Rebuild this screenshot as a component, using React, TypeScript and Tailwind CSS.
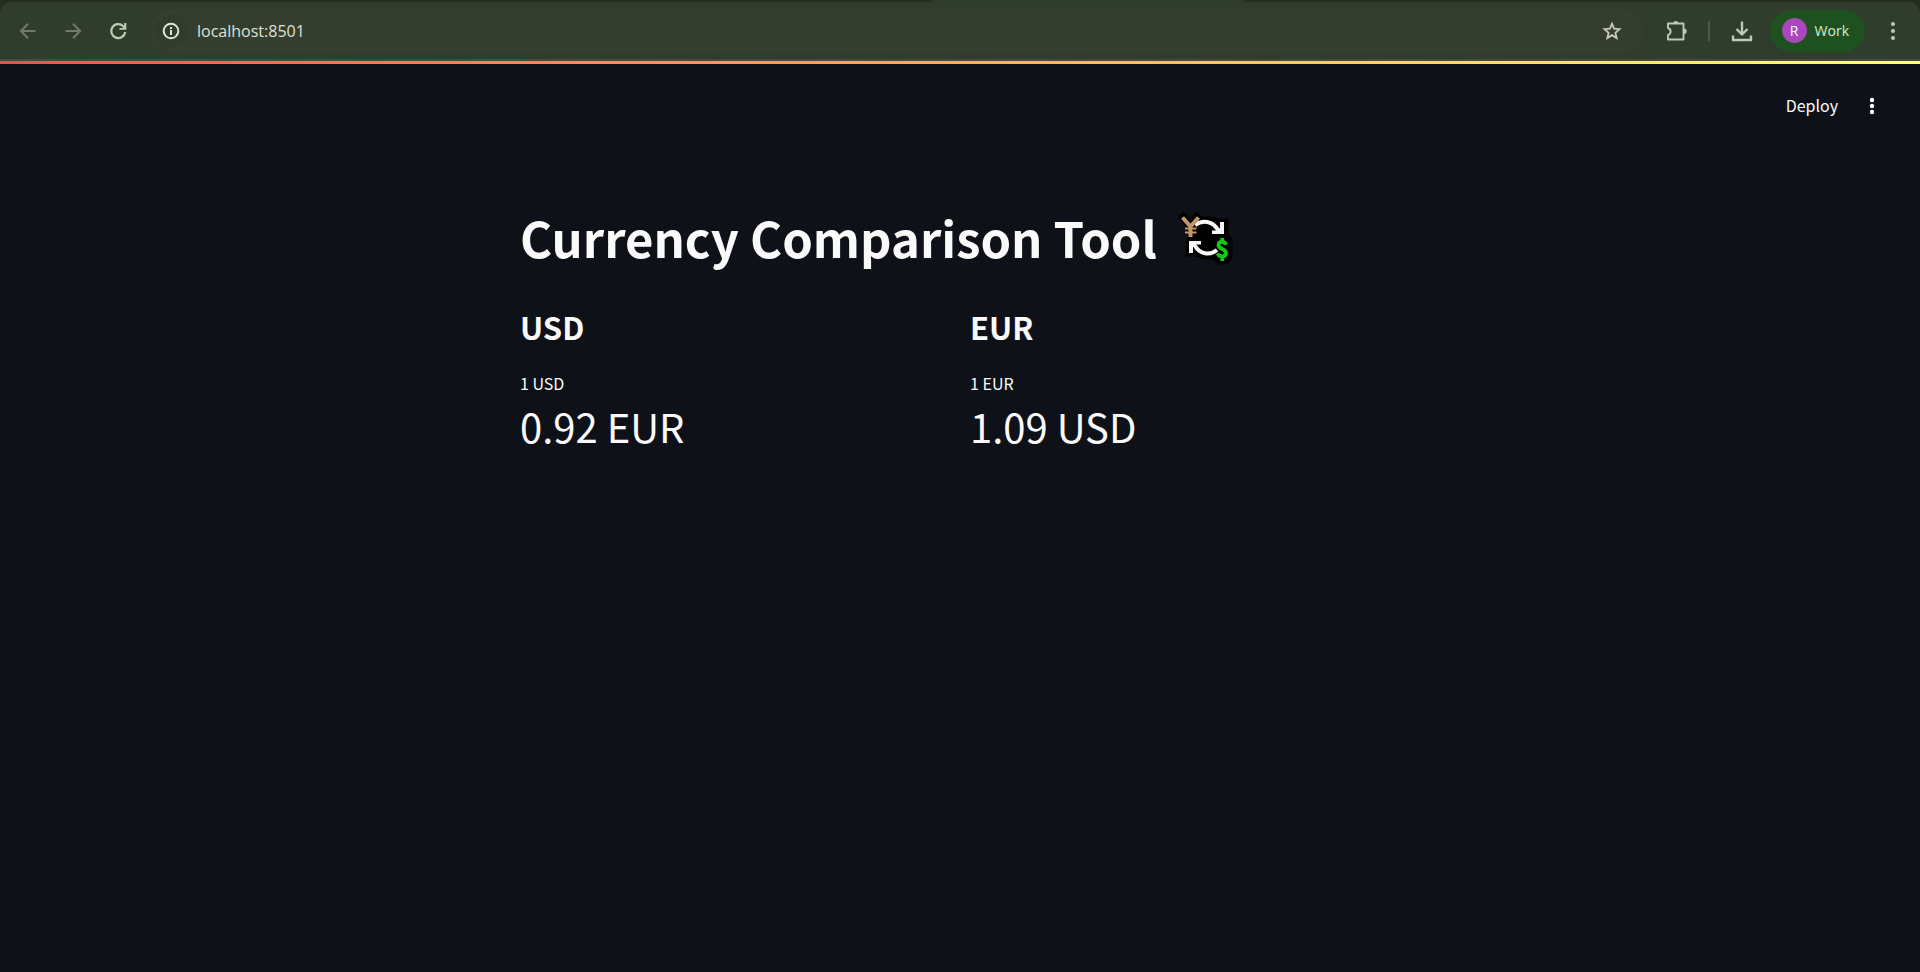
import React from "react";

const iconButton = "flex items-center justify-center";

function BrowserBar() {
  return (
    <header className="bg-[#262c22]">
      <div className="flex justify-center bg-[#262c22] pl-64">
        <div className="h-[2px] w-[312px] bg-[#303c2c]" />
      </div>
      <div className="flex h-[57px] items-center rounded-t-xl bg-[#303c2c] text-[#b9cdb4]">
        <nav aria-label="History" className="flex items-center gap-[21px] pl-4">
          <button aria-label="Back" className={`${iconButton} size-6 text-[#6f7b6b]`}>
            <svg viewBox="0 0 24 24" className="size-6" fill="none" stroke="currentColor" strokeWidth="2">
              <path d="M19.500 12H5M12 4.800L4.900 12L12 19.200" />
            </svg>
          </button>
          <button aria-label="Forward" className={`${iconButton} size-6 text-[#6f7b6b]`}>
            <svg viewBox="0 0 24 24" className="size-6" fill="none" stroke="currentColor" strokeWidth="2">
              <path d="M4.500 12H19M12 4.800L19.100 12L12 19.200" />
            </svg>
          </button>
          <button aria-label="Reload" className={`${iconButton} size-6`}>
            <svg viewBox="0 0 24 24" className="size-6" fill="none" stroke="currentColor" strokeWidth="2.200">
              <path d="M19.200 13A7 7 0 1 1 17.300 7.200L19 9" />
              <path d="M20.300 4V10.800H13.500V9H18.200V4Z" fill="currentColor" stroke="none" />
            </svg>
          </button>
        </nav>
        <div className="ml-5 flex h-[42px] min-w-0 grow items-center rounded-full bg-[#333e2e] pr-5 pl-[5px]">
          <button aria-label="Site information" className={`${iconButton} size-8 rounded-full bg-[#303c2c] text-[#dfe5dc]`}>
            <svg viewBox="0 0 20 20" className="size-5" fill="none" stroke="currentColor" strokeWidth="2">
              <circle cx="10" cy="10" r="7.300" />
              <path d="M10 9V14M10 6V8" />
            </svg>
          </button>
          <input
            aria-label="Address"
            defaultValue="localhost:8501"
            className="ml-[10px] min-w-0 grow bg-transparent font-['Open_Sans',sans-serif] text-base leading-6 text-[#dfe0d8] outline-none"
          />
          <button aria-label="Bookmark this page" className={`${iconButton} size-6 text-[#c9c9c1]`}>
            <svg viewBox="0 0 24 24" className="size-6" fill="none" stroke="currentColor" strokeWidth="1.800">
              <path d="M12 4.700L14.100 9.700L19.500 10.150L15.400 13.700L16.650 19L12 16.150L7.350 19L8.600 13.700L4.500 10.150L9.900 9.700Z" />
            </svg>
          </button>
        </div>
        <div className="flex items-center pr-[15px] pl-5">
          <button aria-label="Extensions" className={`${iconButton} size-6`}>
            <svg viewBox="0 0 24 24" className="size-6" fill="none" stroke="currentColor" strokeWidth="1.900">
              <path d="M4 4.500H19.500V20.500H4V16C7.500 15 7.500 10 4 9Z" strokeLinejoin="round" />
              <path d="M9.200 4.500a2.600 2.600 0 0 1 5.200 0zM20 9.500a2.700 2.700 0 0 1 0 5.400z" fill="currentColor" stroke="none" />
            </svg>
          </button>
          <div className="mx-5 h-5 w-[2px] bg-[#4a5e47]" />
          <button aria-label="Downloads" className={`${iconButton} size-6`}>
            <svg viewBox="0 0 24 24" className="size-6" fill="none" stroke="currentColor" strokeWidth="2.400">
              <path d="M12 2.500V15M6.500 10L12 15.500L17.500 10M3 16.500V21H21V16.500" strokeLinejoin="round" />
            </svg>
          </button>
          <button className="ml-4 flex h-[42px] items-center gap-2 rounded-full bg-[#1e511f] pr-4 pl-3 font-['Open_Sans',sans-serif] text-sm text-[#d5ecd0]">
            <span className="flex size-[25px] items-center justify-center rounded-full bg-[#ab47bc] text-sm text-white">R</span>
            Work
          </button>
          <button aria-label="Browser menu" className={`${iconButton} ml-4 size-6`}>
            <svg viewBox="0 0 24 24" className="size-6" fill="currentColor">
              <circle cx="12" cy="5" r="2" />
              <circle cx="12" cy="12" r="2" />
              <circle cx="12" cy="19" r="2" />
            </svg>
          </button>
        </div>
      </div>
      <div className="h-[2px] bg-[#454a42]" />
    </header>
  );
}

function ExchangeIcon() {
  return (
    <svg viewBox="0 0 60 60" className="size-[60px]" role="img" aria-label="Currency exchange">
      <path
        d="M3 10L9 5L15 11L22 5L26 10L38 10L43 12H53V27L57 31V51L52 57H43L39 52L28 52L21 49H11V33H13V22Z"
        fill="#000"
        stroke="#000"
        strokeWidth="1"
        strokeLinejoin="round"
      />
      <g fill="none" stroke="#f7f7f7" strokeWidth="4">
        <path d="M20 18C27 13 38 13 43.500 24" />
        <path d="M42 43C35 48.500 25 48 19.500 38" />
      </g>
      <g fill="#f7f7f7">
        <path d="M45 15H49V27H37V23.500H42L45 21Z" />
        <path d="M14 34H26V37.500H21L18 40V46H14Z" />
      </g>
      <path d="M7.500 10.500L15.500 19.500L23.500 10.500M15.500 19V30" fill="none" stroke="#c3956a" strokeWidth="4" />
      <path d="M10 21.500H21.500M10 25.500H21.500" fill="none" stroke="#c3956a" strokeWidth="2" />
      <path
        d="M51 37.800C50 33.800 43.500 33.800 43.500 38C43.500 42.500 51 41.500 51 46C51 50.500 44 50.500 42.800 46.400M47.200 31V35M47.200 49V54"
        fill="none"
        stroke="#14c814"
        strokeWidth="3.800"
      />
    </svg>
  );
}

const rates = [
  { code: "USD", label: "1 USD", value: "0.92 EUR" },
  { code: "EUR", label: "1 EUR", value: "1.09 USD" },
];

export default function App() {
  return (
    <div className="flex min-h-screen flex-col bg-[#0e1117] font-['Noto_Sans_CJK_SC',sans-serif] text-[#fafafa]">
      <BrowserBar />
      <div className="h-[3px] bg-linear-to-r from-[#ff4b4b] to-[#fffd80]" />
      <div className="flex items-center justify-end gap-[22px] pt-7 pr-9">
        <button className="pb-[2px] text-base leading-[26px]">Deploy</button>
        <button aria-label="Main menu" className={`${iconButton} size-6`}>
          <svg viewBox="0 0 24 24" className="size-6" fill="currentColor">
            <circle cx="12" cy="6" r="2.200" />
            <circle cx="12" cy="12" r="2.200" />
            <circle cx="12" cy="18" r="2.200" />
          </svg>
        </button>
      </div>
      <main className="mx-auto w-full max-w-[920px] px-5 pt-[84px]">
        <div className="flex items-center gap-[18px]">
          <h1 className="text-[49px] leading-[66px] font-bold">Currency Comparison Tool</h1>
          <ExchangeIcon />
        </div>
        <div className="mt-9 grid grid-cols-2 gap-5">
          {rates.map((rate) => (
            <section key={rate.code}>
              <h2 className="text-[31px] leading-[42px] font-bold">{rate.code}</h2>
              <p className="mt-[23px] text-base leading-6">{rate.label}</p>
              <p className="text-[40px] leading-[62px]">{rate.value}</p>
            </section>
          ))}
        </div>
      </main>
    </div>
  );
}
